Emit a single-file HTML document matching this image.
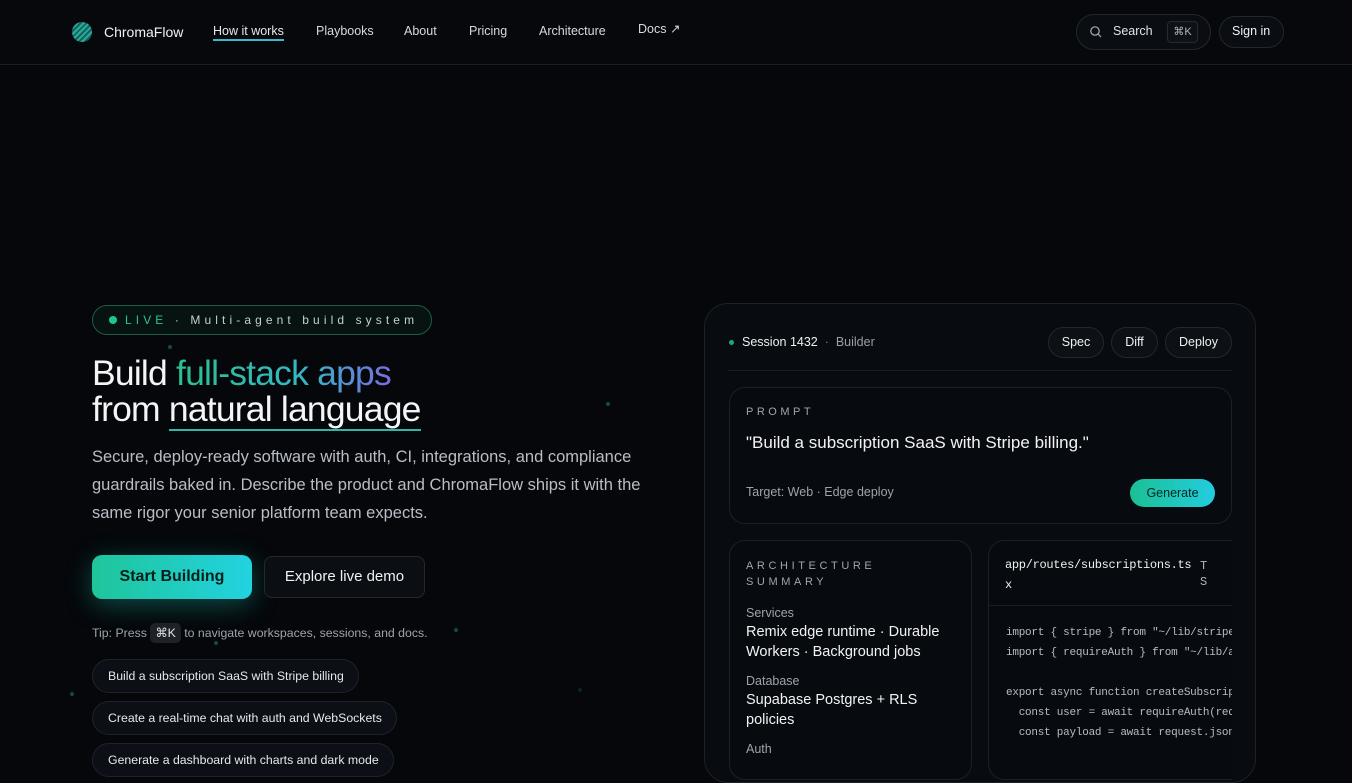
<!DOCTYPE html>
<html><head><meta charset="utf-8"><style>
*{box-sizing:border-box;margin:0;padding:0}
body{width:1352px;height:760px;overflow:hidden;background:#05070b;font-family:"Liberation Sans",sans-serif;color:#e8eaee;position:relative}
.nav{position:absolute;left:0;top:0;width:1352px;height:65px;border-bottom:1px solid #1a1e25;background:#06080c}
.nav a{position:absolute;top:24px;font-size:12.5px;color:#d6d9de;text-decoration:none}
.logo{position:absolute;left:72px;top:22px;width:20px;height:20px;border-radius:50%;background:repeating-linear-gradient(135deg,#23b08e 0 2px,#1b5e6a 2px 4px)}
.brand{position:absolute;left:104px;top:24px;font-size:14px;color:#f0f2f4}
.pill{position:absolute;border:1px solid #22272f;border-radius:20px;background:#0a0d12}
.abs{position:absolute}
.dot{position:absolute;width:4px;height:4px;border-radius:50%;background:#1d6a55;opacity:.7}
.chip{position:absolute;left:92px;height:34px;border:1px solid #1e232b;border-radius:17px;background:#0c0f15;font-size:12.3px;color:#e6e8ec;padding:9px 14px 0 15px}
.panel{position:absolute;left:704px;top:303px;width:552px;height:480px;border:1px solid #1c2028;border-radius:24px;background:#080b10}
.btn{position:absolute;top:327px;height:31px;border:1px solid #23282f;border-radius:16px;background:#0d1015;font-size:12.5px;color:#eef0f2;text-align:center;line-height:29px}
.card{position:absolute;border:1px solid #1c2028;border-radius:16px;background:#070a0e}
.mono{font-family:"Liberation Mono",monospace}
</style></head><body>
<div class="nav">
<div class="logo"></div><div class="brand">ChromaFlow</div>
<a style="left:213px;color:#e6e8ec">How it works</a>
<div class="abs" style="left:213px;top:39px;width:71px;height:2px;background:#3fb6cf"></div>
<a style="left:316px">Playbooks</a><a style="left:404px">About</a><a style="left:469px">Pricing</a><a style="left:539px">Architecture</a><a style="left:638px;top:21px">Docs ↗</a>
<div class="pill" style="left:1076px;top:14px;width:135px;height:36px"></div>
<svg class="abs" style="left:1089px;top:25px" width="14" height="14" viewBox="0 0 14 14"><circle cx="6" cy="6" r="4.2" stroke="#aab0b8" stroke-width="1.2" fill="none"/><path d="M9 9l3 3" stroke="#aab0b8" stroke-width="1.2"/></svg>
<div class="abs" style="left:1113px;top:24px;font-size:12.5px;color:#e0e3e7">Search</div>
<div class="abs" style="left:1167px;top:21px;width:31px;height:22px;border:1px solid #262b33;border-radius:4px;background:#0e1116;font-size:11px;color:#b0b5bc;text-align:center;line-height:20px">⌘K</div>
<div class="pill" style="left:1219px;top:16px;width:65px;height:32px"></div>
<div class="abs" style="left:1232px;top:24px;font-size:12.5px;color:#f0f2f4">Sign in</div>
</div>
<div class="dot" style="left:168px;top:345px"></div><div class="dot" style="left:606px;top:402px"></div><div class="dot" style="left:454px;top:628px"></div><div class="dot" style="left:70px;top:692px"></div><div class="dot" style="left:214px;top:641px"></div><div class="dot" style="left:578px;top:688px;opacity:.3"></div>
<div class="abs" style="left:92px;top:305px;width:340px;height:30px;border:1px solid #1f5a4a;border-radius:15px;background:#071310"></div>
<div class="abs" style="left:109px;top:316px;width:8px;height:8px;border-radius:50%;background:#20c48e"></div>
<div class="abs" style="left:125px;top:313px;font-size:12px;letter-spacing:4.1px;color:#c8cdd2"><span style="color:#2bc391">LIVE</span> · Multi-agent build system</div>
<div class="abs" style="left:92px;top:355px;font-size:35.5px;line-height:36px;letter-spacing:-.8px;color:#f4f5f7">Build <span style="background:linear-gradient(90deg,#2bc08e,#36b6c4 60%,#7b6be0);-webkit-background-clip:text;color:transparent">full-stack apps</span><br>from <span style="border-bottom:2px solid #35b3a5">natural language</span></div>
<div class="abs" style="left:92px;top:443px;width:580px;font-size:16.5px;line-height:28px;color:#b9bec6">Secure, deploy-ready software with auth, CI, integrations, and compliance guardrails baked in. Describe the product and ChromaFlow ships it with the same rigor your senior platform team expects.</div>
<div class="abs" style="left:92px;top:555px;width:160px;height:44px;border-radius:10px;background:linear-gradient(90deg,#1fc59a,#22d2e0);box-shadow:0 6px 26px rgba(30,200,180,.35);font-size:16px;color:#04201b;text-align:center;line-height:44px;font-weight:bold">Start Building</div>
<div class="abs" style="left:264px;top:556px;width:161px;height:42px;border-radius:8px;border:1px solid #23282f;background:#0b0e13;font-size:15px;text-align:center;line-height:40px;color:#f0f2f4">Explore live demo</div>
<div class="abs" style="left:92px;top:623px;font-size:12.3px;color:#9ea4ac">Tip: Press <span style="display:inline-block;background:#1e2228;border-radius:5px;padding:3px 5px;color:#e0e3e6">⌘K</span> to navigate workspaces, sessions, and docs.</div>
<div class="chip" style="top:659px">Build a subscription SaaS with Stripe billing</div>
<div class="chip" style="top:701px">Create a real-time chat with auth and WebSockets</div>
<div class="chip" style="top:743px">Generate a dashboard with charts and dark mode</div>

<div class="panel"></div>
<div class="abs" style="left:729px;top:340px;width:5px;height:5px;border-radius:50%;background:#1fa67c"></div>
<div class="abs" style="left:742px;top:335px;font-size:12.5px;color:#eef0f2">Session 1432 <span style="color:#6f757d">&nbsp;·&nbsp;</span> <span style="color:#9aa0a8">Builder</span></div>
<div class="btn" style="left:1048px;width:56px">Spec</div>
<div class="btn" style="left:1111px;width:47px">Diff</div>
<div class="btn" style="left:1165px;width:67px">Deploy</div>
<div class="abs" style="left:728px;top:370px;width:504px;height:1px;background:#1a1e25"></div>
<div class="card" style="left:729px;top:387px;width:503px;height:137px"></div>
<div class="abs" style="left:746px;top:406px;font-size:11px;letter-spacing:3.5px;color:#a0a6ad">PROMPT</div>
<div class="abs" style="left:746px;top:433px;font-size:17px;color:#f2f3f5">"Build a subscription SaaS with Stripe billing."</div>
<div class="abs" style="left:746px;top:485px;font-size:12.5px;color:#9ea4ac">Target: Web · Edge deploy</div>
<div class="abs" style="left:1130px;top:479px;width:85px;height:28px;border-radius:14px;background:linear-gradient(90deg,#1bc094,#22cde0);font-size:12.5px;color:#06251f;text-align:center;line-height:28px">Generate</div>
<div class="card" style="left:729px;top:540px;width:243px;height:240px"></div>
<div class="abs" style="left:746px;top:558px;font-size:11px;letter-spacing:3.6px;line-height:16px;color:#a0a6ad">ARCHITECTURE<br>SUMMARY</div>
<div class="abs" style="left:746px;top:606px;font-size:12.5px;color:#9ea4ac">Services</div>
<div class="abs" style="left:746px;top:622px;width:215px;font-size:14.5px;line-height:20px;color:#f2f3f5">Remix edge runtime · Durable Workers · Background jobs</div>
<div class="abs" style="left:746px;top:674px;font-size:12.5px;color:#9ea4ac">Database</div>
<div class="abs" style="left:746px;top:690px;width:215px;font-size:14.5px;line-height:20px;color:#f2f3f5">Supabase Postgres + RLS policies</div>
<div class="abs" style="left:746px;top:742px;font-size:12.5px;color:#9ea4ac">Auth</div>
<div class="card" style="left:988px;top:540px;width:244px;height:240px;border-right:none;border-radius:16px 0 0 16px;overflow:hidden">
<div class="mono" style="position:absolute;left:16px;top:14px;font-size:12px;letter-spacing:-.3px;line-height:20px;color:#eef0f2">app/routes/subscriptions.ts<br>x</div>
<div class="mono" style="position:absolute;left:211px;top:17px;font-size:12px;line-height:16px;color:#b0b5bc">T<br>S</div>
<div style="position:absolute;left:0;top:64px;width:260px;height:1px;background:#1a1e25"></div>
<pre class="mono" style="position:absolute;left:17px;top:82px;font-size:11px;letter-spacing:-.25px;line-height:20px;color:#b7bcc3">import { stripe } from "~/lib/stripe.server";
import { requireAuth } from "~/lib/auth.server";

export async function createSubscription(request) {
  const user = await requireAuth(request);
  const payload = await request.json();</pre>
</div>
</body></html>
